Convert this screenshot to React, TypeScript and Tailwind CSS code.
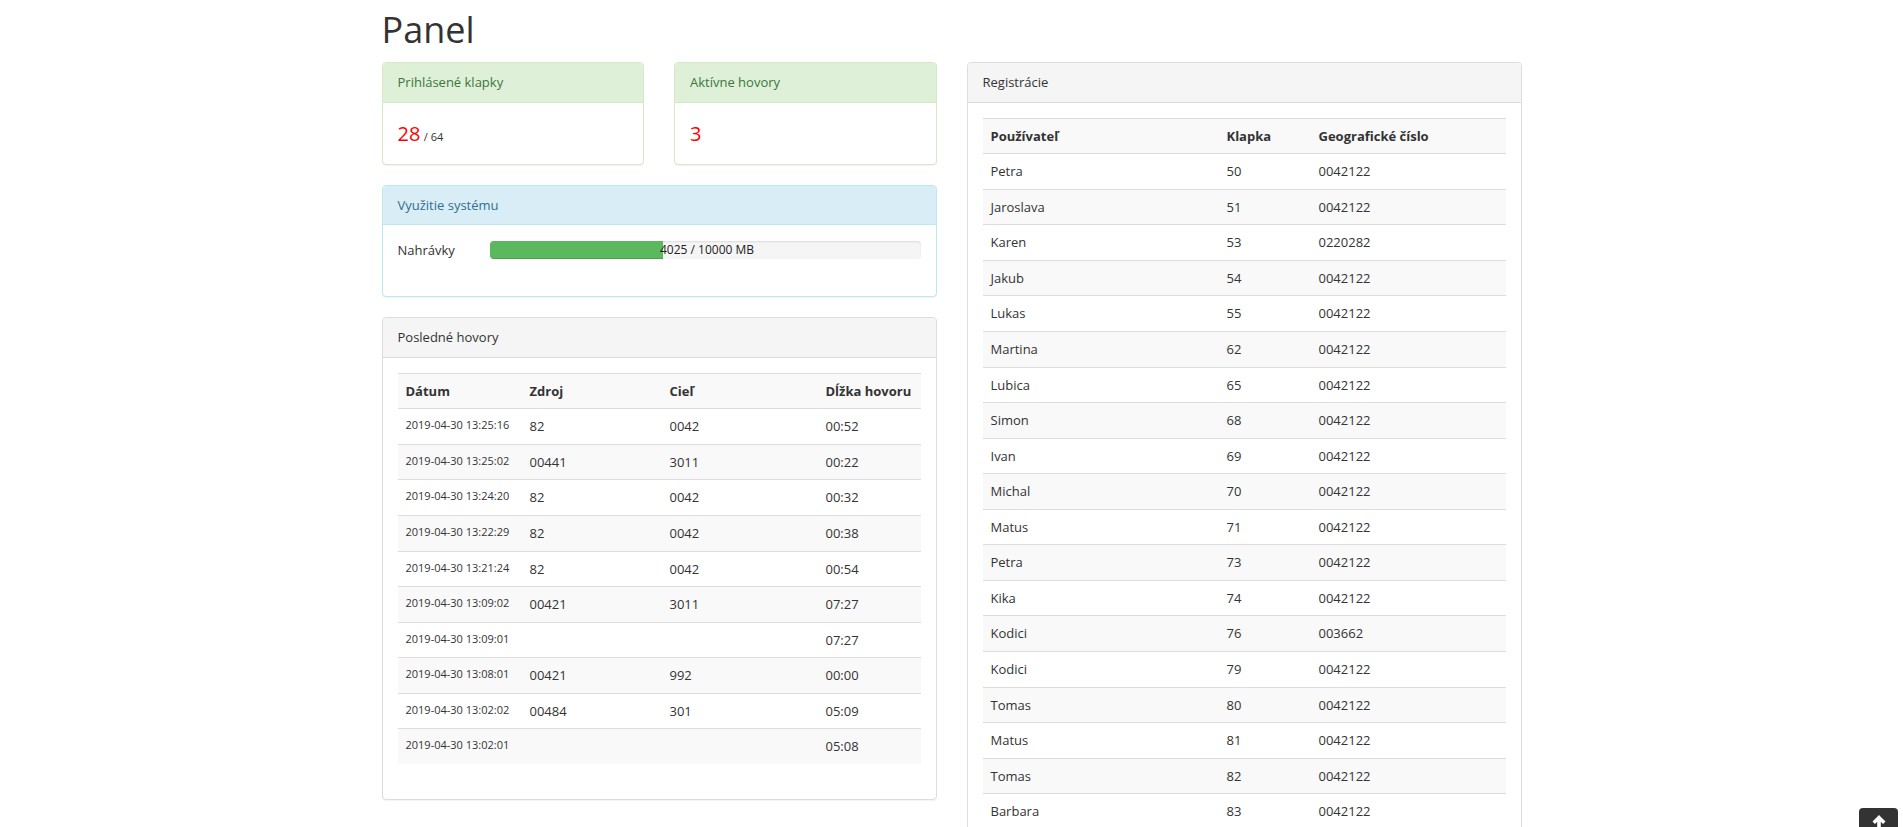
import React from "react";

const calls: [string, string, string, string][] = [
  ["2019-04-30 13:25:16", "82", "0042", "00:52"],
  ["2019-04-30 13:25:02", "00441", "3011", "00:22"],
  ["2019-04-30 13:24:20", "82", "0042", "00:32"],
  ["2019-04-30 13:22:29", "82", "0042", "00:38"],
  ["2019-04-30 13:21:24", "82", "0042", "00:54"],
  ["2019-04-30 13:09:02", "00421", "3011", "07:27"],
  ["2019-04-30 13:09:01", "", "", "07:27"],
  ["2019-04-30 13:08:01", "00421", "992", "00:00"],
  ["2019-04-30 13:02:02", "00484", "301", "05:09"],
  ["2019-04-30 13:02:01", "", "", "05:08"],
];

const regs: [string, string, string][] = [
  ["Petra", "50", "0042122"],
  ["Jaroslava", "51", "0042122"],
  ["Karen", "53", "0220282"],
  ["Jakub", "54", "0042122"],
  ["Lukas", "55", "0042122"],
  ["Martina", "62", "0042122"],
  ["Lubica", "65", "0042122"],
  ["Simon", "68", "0042122"],
  ["Ivan", "69", "0042122"],
  ["Michal", "70", "0042122"],
  ["Matus", "71", "0042122"],
  ["Petra", "73", "0042122"],
  ["Kika", "74", "0042122"],
  ["Kodici", "76", "003662"],
  ["Kodici", "79", "0042122"],
  ["Tomas", "80", "0042122"],
  ["Matus", "81", "0042122"],
  ["Tomas", "82", "0042122"],
  ["Barbara", "83", "0042122"],
];

function Panel({
  title,
  variant,
  children,
  className = "",
}: {
  title: string;
  variant: "success" | "info" | "default";
  children: React.ReactNode;
  className?: string;
}) {
  const border =
    variant === "success"
      ? "border-[#d6e9c6]"
      : variant === "info"
      ? "border-[#bce8f1]"
      : "border-[#dddddd]";
  const head =
    variant === "success"
      ? "bg-[#dff0d8] text-[#3c763d] border-[#d6e9c6]"
      : variant === "info"
      ? "bg-[#d9edf7] text-[#31708f] border-[#bce8f1]"
      : "bg-[#f5f5f5] text-[#333333] border-[#dddddd]";
  return (
    <div
      className={`mb-[20px] rounded-[4px] border bg-white shadow-[0_1px_1px_rgba(0,0,0,0.05)] ${border} ${className}`}
    >
      <div className={`rounded-t-[3px] border-b px-[15px] py-[10px] ${head}`}>{title}</div>
      <div className="p-[15px]">{children}</div>
    </div>
  );
}

export default function App() {
  return (
    <div className="h-screen overflow-hidden bg-white font-['Open_Sans',sans-serif] text-[13px] leading-[1.42857] text-[#333333]">
      <div className="mx-auto w-[1170px] px-[15px]">
        <h1 className="mb-[12px] pt-[10px] text-[36px] font-normal leading-[40px] text-[#333333]">Panel</h1>
        <div className="flex gap-[30px]">
          <div className="flex w-[555px] flex-col">
            <div className="flex gap-[30px]">
              <Panel title="Prihlásené klapky" variant="success" className="flex-1">
                <div className="h-[31px] leading-[31px]">
                  <span className="text-[20px] text-[#ff0000]">28</span>{" "}
                  <span className="text-[11px]">/ 64</span>
                </div>
              </Panel>
              <Panel title="Aktívne hovory" variant="success" className="flex-1">
                <div className="h-[31px] leading-[31px]">
                  <span className="text-[20px] text-[#ff0000]">3</span>
                </div>
              </Panel>
            </div>
            <Panel title="Využitie systému" variant="info">
              <div className="flex pt-[1px]">
                <div className="w-[92px] shrink-0">Nahrávky</div>
                <div className="mb-[22px] flex h-[18px] flex-1 overflow-hidden rounded-[4px] bg-[#f5f5f5] shadow-[inset_0_1px_2px_rgba(0,0,0,0.1)]">
                  <div
                    className="h-full bg-[#5cb85c] shadow-[inset_0_-1px_0_rgba(0,0,0,0.15)]"
                    style={{ width: "40.25%" }}
                  />
                  <span className="-ml-[3px] text-[12px] leading-[18px] text-[#222222]">4025 / 10000 MB</span>
                </div>
              </div>
            </Panel>
            <Panel title="Posledné hovory" variant="default">
              <table className="mb-[20px] w-full table-fixed border-collapse">
                <colgroup>
                  <col className="w-[124px]" />
                  <col className="w-[140px]" />
                  <col className="w-[156px]" />
                  <col />
                </colgroup>
                <tbody>
                  <tr className="border-t border-[#dddddd] bg-[#f9f9f9]">
                    <td className="p-[8px] align-top font-bold">Dátum</td>
                    <td className="p-[8px] align-top font-bold">Zdroj</td>
                    <td className="p-[8px] align-top font-bold">Cieľ</td>
                    <td className="p-[8px] align-top font-bold">Dĺžka hovoru</td>
                  </tr>
                  {calls.map((r, i) => (
                    <tr
                      key={i}
                      className={`border-t border-[#dddddd] ${i % 2 === 1 ? "bg-[#f9f9f9]" : "bg-white"}`}
                    >
                      <td className="p-[8px] align-top text-[11px] whitespace-nowrap">{r[0]}</td>
                      <td className="p-[8px] align-top">{r[1]}</td>
                      <td className="p-[8px] align-top">{r[2]}</td>
                      <td className="p-[8px] align-top">{r[3]}</td>
                    </tr>
                  ))}
                </tbody>
              </table>
            </Panel>
          </div>
          <div className="w-[555px]">
            <Panel title="Registrácie" variant="default">
              <table className="mb-[20px] w-full table-fixed border-collapse">
                <colgroup>
                  <col className="w-[236px]" />
                  <col className="w-[92px]" />
                  <col />
                </colgroup>
                <tbody>
                  <tr className="border-t border-[#dddddd] bg-[#f9f9f9]">
                    <td className="p-[8px] align-top font-bold">Používateľ</td>
                    <td className="p-[8px] align-top font-bold">Klapka</td>
                    <td className="p-[8px] align-top font-bold">Geografické číslo</td>
                  </tr>
                  {regs.map((r, i) => (
                    <tr
                      key={i}
                      className={`border-t border-[#dddddd] ${i % 2 === 1 ? "bg-[#f9f9f9]" : "bg-white"}`}
                    >
                      <td className="p-[8px] align-top">{r[0]}</td>
                      <td className="p-[8px] align-top">{r[1]}</td>
                      <td className="p-[8px] align-top">{r[2]}</td>
                    </tr>
                  ))}
                </tbody>
              </table>
            </Panel>
          </div>
        </div>
      </div>
      <button
        type="button"
        aria-label="Scroll to top"
        className="fixed bottom-[-22px] right-[5px] flex h-[41px] w-[39px] items-start justify-center rounded-[4px] bg-[#333333] pt-[7px]"
      >
        <svg width="14" height="14" viewBox="0 0 14 14">
          <path d="M7 0 L13.5 6.5 L11 9 L8.8 6.8 L8.8 14 L5.2 14 L5.2 6.8 L3 9 L0.5 6.5 Z" fill="#ffffff" />
        </svg>
      </button>
    </div>
  );
}
